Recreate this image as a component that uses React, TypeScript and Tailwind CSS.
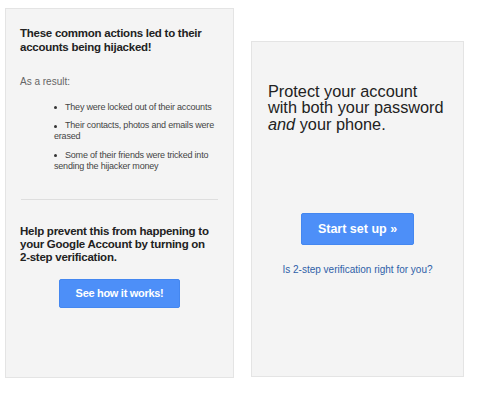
export default function App() {
    const results = [
        "They were locked out of their accounts",
        "Their contacts, photos and emails were erased",
        "Some of their friends were tricked into sending the hijacker money",
    ];

    return (
        <div className="flex items-start bg-white w-[480px] h-[407px] font-['Liberation_Sans',Arial,sans-serif]">
            <div className="ml-[5px] mt-[8px] w-[229px] h-[370px] border border-[#e4e4e4] bg-[#f4f4f4] px-[14px] pt-[18px]">
                <h2 className="text-[11.5px] leading-[13.5px] font-bold tracking-[-0.25px] text-[#222]">
                    These common actions led to their accounts being hijacked!
                </h2>

                <p className="mt-[22px] text-[10px] leading-[12px] text-[#666]">As a result:</p>

                <ul className="mt-[14px] pl-[34px] flex flex-col gap-[7.4px]">
                    {results.map((r) => (
                        <li key={r} className="text-[9px] leading-[11px] tracking-[-0.2px] text-[#444]">
                            <span className="inline-block w-[3px] h-[3px] rounded-full bg-[#333] align-middle mr-[8px]" />
                            {r}
                        </li>
                    ))}
                </ul>

                <div className="mt-[27px] h-px bg-[#dedede] mx-[1px]" />

                <p className="mt-[25px] text-[11.5px] leading-[13px] font-bold tracking-[-0.25px] text-[#222]">
                    Help prevent this from happening to your Google Account by turning on{" "}
                    <span className="whitespace-nowrap">2-step</span> verification.
                </p>

                <div className="mt-[15px] flex justify-center">
                    <button className="w-[121px] h-[29px] rounded-[2px] border border-[#4487f0] bg-[#4d8ff8] text-white text-[11px] font-bold tracking-[-0.3px]">
                        See how it works!
                    </button>
                </div>
            </div>

            <div className="ml-[17px] mt-[41px] w-[213px] h-[336px] border border-[#e4e4e4] bg-[#f4f4f4] px-[16px] pt-[41px]">
                <p className="text-[16.3px] leading-[16.3px] text-[#222]">
                    Protect your account with both your password <em>and</em> your phone.
                </p>

                <div className="mt-[81px] flex justify-center">
                    <button className="w-[113px] h-[32px] rounded-[2px] border border-[#4487f0] bg-[#4d8ff8] text-white text-[12.5px] font-bold">
                        Start set up »
                    </button>
                </div>

                <p className="mt-[19px] text-center text-[10px] leading-[12px] text-[#2f5fa8]">
                    <a href="#">Is 2-step verification right for you?</a>
                </p>
            </div>
        </div>
    );
}
